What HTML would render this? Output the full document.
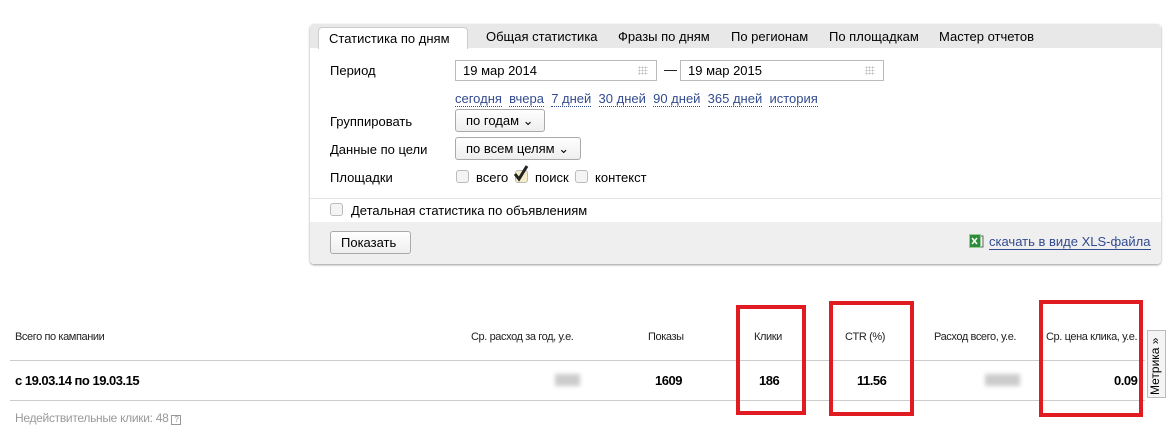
<!DOCTYPE html>
<html><head><meta charset="utf-8"><style>
*{box-sizing:border-box;margin:0;padding:0}
body{width:1169px;height:448px;background:#fff;font-family:"Liberation Sans",Arial,sans-serif;font-size:13px;color:#000;position:relative;overflow:hidden}
.a{position:absolute;white-space:nowrap}
.panel{position:absolute;left:310px;top:24px;width:851px;height:240px;border-radius:4px;box-shadow:0 1px 2px #999;background:#fff}
.tabs{position:absolute;left:0;top:0;width:851px;height:24px;background:#e8e8e8;border-radius:4px 4px 0 0}
.tab{position:absolute;top:5px;font-size:13px}
.tab.on{left:8px;top:3px;width:150px;height:22px;background:#fff;border:1px solid #ccc;border-bottom:none;border-radius:4px 4px 0 0;padding:3px 0 0 10px}
.inp{position:absolute;height:21px;border:1px solid #bbb;background:#fff;padding:2px 0 0 7px;font-size:13px}
.inp i{position:absolute;right:8px;top:5px;width:10px;height:9px;background:radial-gradient(#bbb 40%,transparent 45%) 0 0/3px 3px}
.lk{color:#334b8f;border-bottom:1px dotted #334b8f;font-size:13px}
.btn{position:absolute;height:23px;border:1px solid #aaa;border-radius:3px;background:linear-gradient(#fff,#eee);padding:3px 0 0 10px;font-size:13px}
.cb{position:absolute;width:13px;height:13px;border:1px solid #bbb;border-radius:3px;background:#f4f4f4}
.t{font-size:11px;letter-spacing:-.4px;color:#222}
.b{font-size:13px;font-weight:bold;letter-spacing:-.5px}
.red{position:absolute;border:4px solid #e01b22}
</style></head><body>
<div class="panel">
 <div class="tabs">
  <div class="tab on">Статистика по дням</div>
  <div class="tab" style="left:176px">Общая статистика</div>
  <div class="tab" style="left:308px">Фразы по дням</div>
  <div class="tab" style="left:421px">По регионам</div>
  <div class="tab" style="left:519px">По площадкам</div>
  <div class="tab" style="left:629px">Мастер отчетов</div>
 </div>
 <div class="a" style="left:20px;top:39px">Период</div>
 <div class="inp" style="left:145px;top:36px;width:202px">19 мар 2014<i></i></div>
 <div class="a" style="left:354px;top:38px">—</div>
 <div class="inp" style="left:370px;top:36px;width:204px">19 мар 2015<i></i></div>
 <div class="a" style="left:145px;top:67px">
  <span class="lk">сегодня</span>&nbsp; <span class="lk">вчера</span>&nbsp; <span class="lk">7 дней</span>&nbsp; <span class="lk">30 дней</span>&nbsp; <span class="lk">90 дней</span>&nbsp; <span class="lk">365 дней</span>&nbsp; <span class="lk">история</span></div>
 <div class="a" style="left:20px;top:90px">Группировать</div>
 <div class="btn" style="left:145px;top:85px;width:90px">по годам ⌄</div>
 <div class="a" style="left:20px;top:118px">Данные по цели</div>
 <div class="btn" style="left:145px;top:113px;width:126px">по всем целям ⌄</div>
 <div class="a" style="left:20px;top:146px">Площадки</div>
 <div class="cb" style="left:146px;top:146px"></div><div class="a" style="left:166px;top:146px">всего</div>
 <div class="cb" style="left:205px;top:146px;background:#f6edc8"></div>
 <svg class="a" style="left:203px;top:140px" width="16" height="18"><path d="M2 10 L6 15 L14 2" stroke="#222" stroke-width="3" fill="none"/></svg>
 <div class="a" style="left:225px;top:146px">поиск</div>
 <div class="cb" style="left:265px;top:146px"></div><div class="a" style="left:285px;top:146px">контекст</div>
 <div class="a" style="left:0;top:174px;width:851px;height:1px;background:#e4e4e4"></div>
 <div class="cb" style="left:20px;top:179px"></div><div class="a" style="left:41px;top:179px">Детальная статистика по объявлениям</div>
 <div class="a" style="left:0;top:198px;width:851px;height:42px;background:#efeff0;border-radius:0 0 4px 4px"></div>
 <div class="btn" style="left:20px;top:207px;width:81px">Показать</div>
 <svg class="a" style="left:659px;top:210px" width="16" height="15"><rect x="0.5" y="0.5" width="11" height="13" fill="#2e8b3a" stroke="#9c9"/><path d="M3 4l5 6M8 4l-5 6" stroke="#fff" stroke-width="1.5"/><path d="M12 2h2v11h-2" stroke="#666" fill="none"/></svg>
 <div class="a lk" style="left:679px;top:210px;border-bottom:1px solid #334b8f">скачать в виде XLS-файла</div>
</div>
<div class="a t" style="left:15px;top:331px">Всего по кампании</div>
<div class="a t" style="left:471px;top:331px">Ср. расход за год, у.е.</div>
<div class="a t" style="left:648px;top:331px">Показы</div>
<div class="a t" style="left:754px;top:331px">Клики</div>
<div class="a t" style="left:845px;top:331px">CTR (%)</div>
<div class="a t" style="left:934px;top:331px">Расход всего, у.е.</div>
<div class="a t" style="left:1046px;top:331px">Ср. цена клика, у.е.</div>
<div class="a" style="left:10px;top:360px;width:1135px;height:1px;background:#ccc"></div>
<div class="a b" style="left:15px;top:373px">с 19.03.14 по 19.03.15</div>
<div class="a" style="left:555px;top:374px;width:25px;height:12px;background:#ccc;filter:blur(2px)"></div>
<div class="a b" style="left:655px;top:373px">1609</div>
<div class="a b" style="left:759px;top:373px">186</div>
<div class="a b" style="left:857px;top:373px">11.56</div>
<div class="a" style="left:985px;top:374px;width:35px;height:12px;background:#ccc;filter:blur(2px)"></div>
<div class="a b" style="left:1114px;top:373px">0.09</div>
<div class="a" style="left:10px;top:400px;width:1135px;height:1px;background:#ccc"></div>
<div class="a" style="left:15px;top:411px;font-size:12px;color:#999;letter-spacing:-.3px">Недействительные клики: 48 <span style="display:inline-block;width:10px;height:10px;border:1px solid #999;font-size:8px;line-height:8px;text-align:center">?</span></div>
<div class="red" style="left:736px;top:305px;width:70px;height:110px"></div>
<div class="red" style="left:829px;top:301px;width:85px;height:115px"></div>
<div class="red" style="left:1039px;top:300px;width:104px;height:117px"></div>
<div class="a" style="left:1147px;top:330px;width:19px;height:68px;border:1px solid #bbb;background:#f4f4f4"><div style="position:absolute;left:0;top:64px;transform:rotate(-90deg);transform-origin:0 0;font-size:12px;white-space:nowrap">Метрика »</div></div>
</body></html>
